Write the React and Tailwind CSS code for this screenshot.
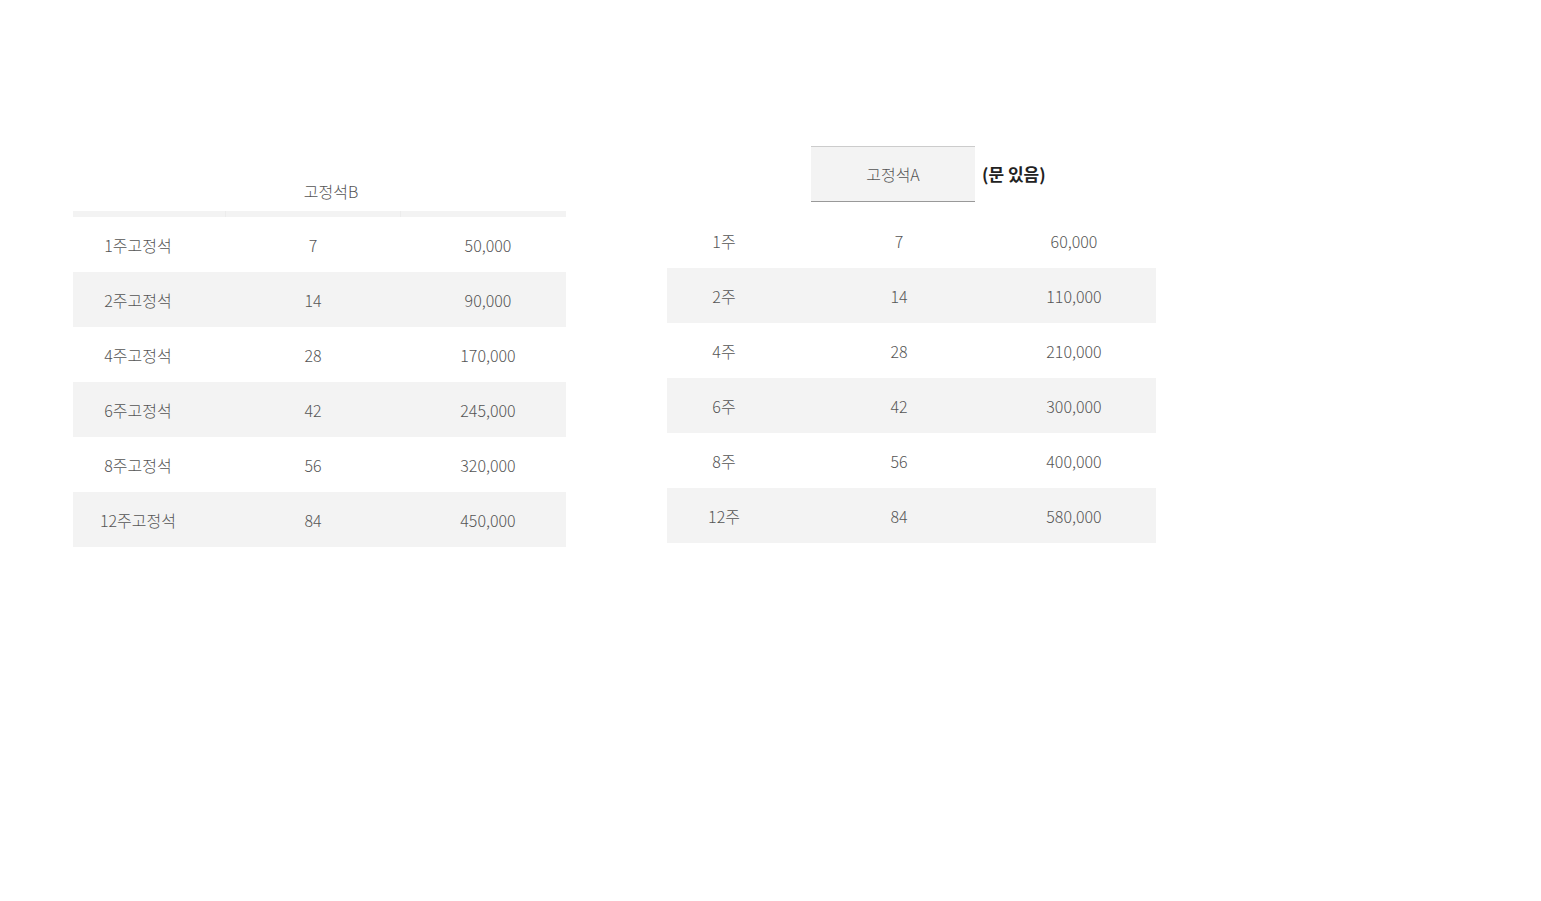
const left = [
  ['1주고정석', '7', '50,000'],
  ['2주고정석', '14', '90,000'],
  ['4주고정석', '28', '170,000'],
  ['6주고정석', '42', '245,000'],
  ['8주고정석', '56', '320,000'],
  ['12주고정석', '84', '450,000'],
];
const right = [
  ['1주', '7', '60,000'],
  ['2주', '14', '110,000'],
  ['4주', '28', '210,000'],
  ['6주', '42', '300,000'],
  ['8주', '56', '400,000'],
  ['12주', '84', '580,000'],
];

export default function App() {
  return (
    <div className="min-h-screen bg-white text-[16px] text-[#555] font-light" style={{ fontFamily: '"Noto Sans CJK KR", "Noto Sans", sans-serif' }}>
      <div className="flex items-start pt-[146px] pl-[73px]">
        {/* 고정석B */}
        <div className="w-[493px]">
          <div className="h-[65px] flex items-end justify-center pb-[8px] pl-[23px]">고정석B</div>
          <div className="grid grid-cols-[153px_175px_165px] h-[6px] bg-[#f3f3f3]">
            <div className="border-r border-[#ececec]" />
            <div className="border-r border-[#ececec]" />
            <div />
          </div>
          {left.map((r, i) => (
            <div key={r[0]} className={`grid grid-cols-[130px_220px_130px] h-[55px] items-center ${i % 2 ? 'bg-[#f3f3f3]' : 'bg-white'}`}>
              <div className="text-center">{r[0]}</div>
              <div className="text-center">{r[1]}</div>
              <div className="text-center">{r[2]}</div>
            </div>
          ))}
        </div>

        {/* 고정석A */}
        <div className="w-[489px] ml-[101px]">
          <div className="flex items-center h-[56px]">
            <div className="ml-[144px] w-[164px] h-[56px] flex items-center justify-center bg-[#f3f3f3] border-t border-[#ccc] border-b border-b-[#999]">고정석A</div>
            <span className="ml-[7px] font-bold text-[#222] text-[17px]">(문 있음)</span>
          </div>
          <div className="h-[11px]" />
          {right.map((r, i) => (
            <div key={r[0]} className={`grid grid-cols-[114px_236px_114px_1fr] h-[55px] items-center ${i % 2 ? 'bg-[#f3f3f3]' : 'bg-white'}`}>
              <div className="text-center">{r[0]}</div>
              <div className="text-center">{r[1]}</div>
              <div className="text-center">{r[2]}</div>
              <div />
            </div>
          ))}
        </div>
      </div>
    </div>
  );
}
